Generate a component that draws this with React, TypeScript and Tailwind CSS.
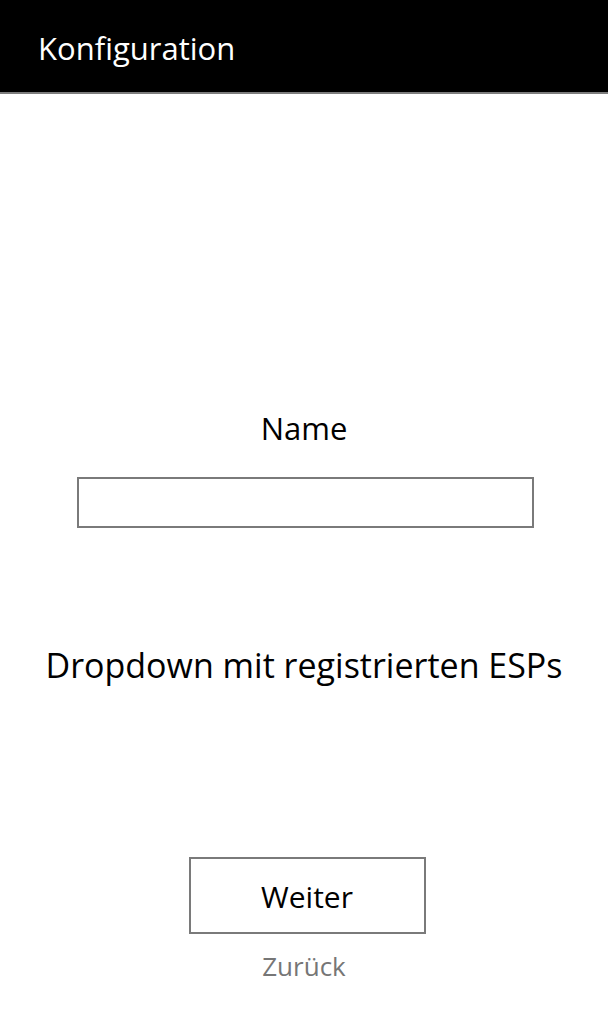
import React from 'react';

const App: React.FC = () => {
  return (
    <div className="min-h-[1023px] bg-white flex flex-col" style={{ fontFamily: '"Open Sans", "Noto Sans", sans-serif' }}>
      <header className="h-[94px] bg-black border-b-2 border-[#7d7d7d] flex items-center px-[38px] pt-[4px]">
        <h1 className="text-white text-[31px] font-normal leading-none">Konfiguration</h1>
      </header>

      <main className="flex flex-col items-center">
        <div className="mt-[315px] h-[38px] flex items-center text-[31px] text-black leading-none">Name</div>
        <input
          type="text"
          className="mt-[30px] ml-[2px] w-[457px] h-[51px] border-2 border-[#7a7a7a] bg-white outline-none"
        />
        <div className="mt-[118px] h-[38px] flex items-center text-[34px] text-black leading-none">
          Dropdown mit registrierten ESPs
        </div>
        <button className="mt-[173px] ml-[6px] w-[237px] h-[77px] pt-[3px] border-2 border-[#7a7a7a] bg-white text-[30px] text-black leading-none">
          Weiter
        </button>
        <a className="mt-[17px] h-[30px] flex items-center text-[26px] text-[#767676] leading-none cursor-pointer">Zurück</a>
      </main>
    </div>
  );
};

export default App;
